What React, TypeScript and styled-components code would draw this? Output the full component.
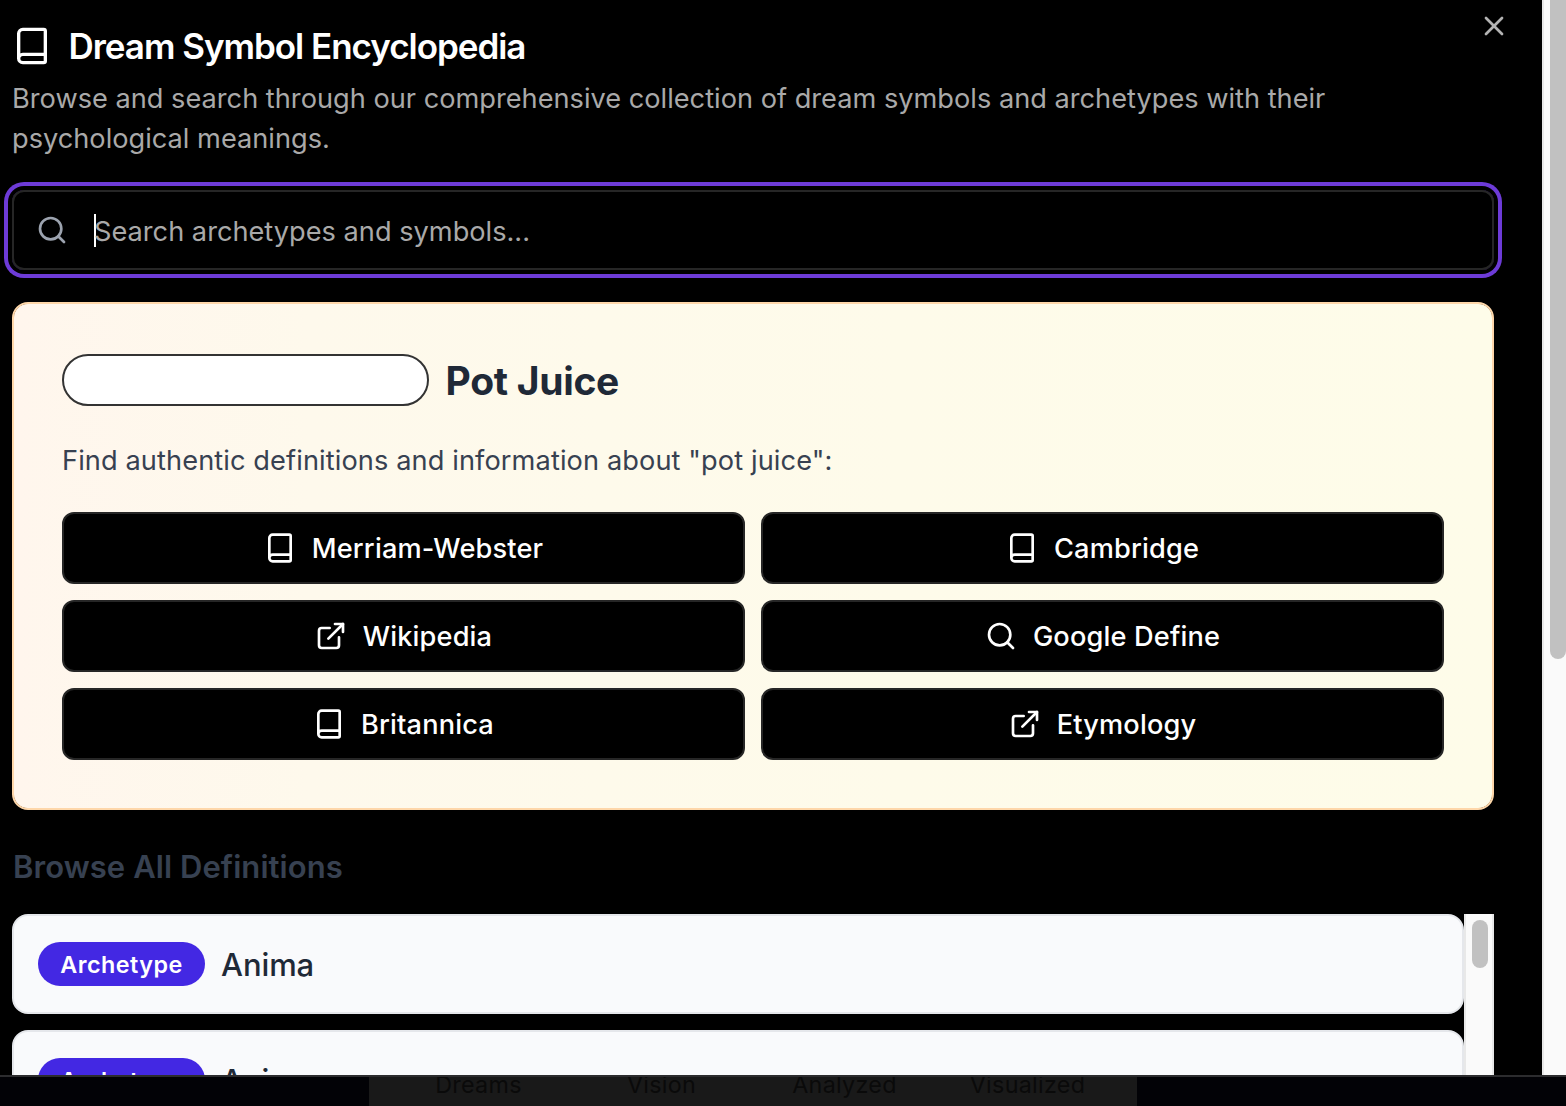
import React from "react";
import styled, { createGlobalStyle } from "styled-components";
import { Book, ExternalLink, Search, X } from "lucide-react";

const Global = createGlobalStyle`
  * { box-sizing: border-box; }
  body { margin: 0; background: #020206; overflow: hidden; font-family: Inter, "Liberation Sans", sans-serif; }
  h1, h2, h3, p { margin: 0; }
`;

const Screen = styled.div`
  width: 1566px;
  height: 1106px;
  display: flex;
  flex-direction: column;
  overflow: hidden;
`;

const Dialog = styled.main`
  position: relative;
  height: 1077px;
  flex: none;
  display: flex;
  background: #000;
  border-bottom: 2px solid #2c2c2e;
  overflow: hidden;
`;

const Content = styled.div`
  flex: 1;
  min-width: 0;
  padding: 22px 48px 0 12px;
  display: flex;
  flex-direction: column;
`;

const Header = styled.header`
  display: flex;
  flex-direction: column;
  gap: 9px;
`;

const Title = styled.h1`
  display: flex;
  align-items: center;
  gap: 16.5px;
  height: 48px;
  color: #fff;
  font-size: 35px;
  font-weight: 600;
  letter-spacing: -1.03px;
  white-space: nowrap;
`;

const Description = styled.p`
  color: #a9a9a9;
  font-size: 27.2px;
  line-height: 40px;
  letter-spacing: 0;
  white-space: nowrap;
`;

const CloseButton = styled.button`
  position: absolute;
  top: 10px;
  right: 56px;
  width: 32px;
  height: 32px;
  padding: 0;
  border: 0;
  background: none;
  color: #b3b3b3;
`;

const SearchField = styled.label`
  display: flex;
  align-items: center;
  flex: none;
  height: 80px;
  margin-top: 31px;
  padding-left: 22px;
  border: 2px solid #262626;
  border-radius: 12px;
  box-shadow: 0 0 0 4px #000, 0 0 0 8px #6d3bd7;
  color: #9ca3af;
`;

const Caret = styled.span`
  width: 2px;
  height: 33px;
  margin-left: 26px;
  margin-right: -2px;
  background: #fff;
`;

const Placeholder = styled.span`
  padding-top: 4px;
  color: #a9a9a9;
  font-size: 27.2px;
  line-height: 40px;
  letter-spacing: 0;
`;

const Card = styled.section`
  flex: none;
  height: 508px;
  margin-top: 32px;
  padding: 48px;
  border: 2px solid #fed7aa;
  border-radius: 16px;
  background: linear-gradient(to right, #fff6ed, #fef9ec 20%, #fefbea 60%, #fefce9) padding-box;
  background-color: #fed7aa;
`;

const CardHeader = styled.div`
  display: flex;
  align-items: center;
  gap: 16.5px;
  height: 56px;
`;

const EmptyBadge = styled.span`
  width: 367px;
  height: 52px;
  border: 2px solid #333;
  border-radius: 26px;
  background: #fff;
`;

const Term = styled.h2`
  padding-top: 2px;
  color: #1f2937;
  font-size: 39px;
  font-weight: 700;
  line-height: 56px;
  letter-spacing: -0.3px;
`;

const Prompt = styled.p`
  margin-top: 33px;
  color: #374151;
  font-size: 27.2px;
  line-height: 40px;
  letter-spacing: 0.1px;
`;

const LinkGrid = styled.div`
  display: grid;
  grid-template-columns: 1fr 1fr;
  gap: 16px;
  margin-top: 31px;
`;

const LinkButton = styled.button`
  display: flex;
  align-items: center;
  justify-content: center;
  gap: 16px;
  height: 72px;
  padding: 0;
  border: 2px solid #262626;
  border-radius: 12px;
  background: #000;
  color: #fff;
  font: 500 27.2px/40px Inter, "Liberation Sans", sans-serif;
  letter-spacing: 0.15px;
`;

const LinkLabel = styled.span`
  padding-top: 2px;
`;

const SectionTitle = styled.h3`
  margin-top: 33px;
  padding-left: 1px;
  color: #374151;
  font-size: 31px;
  font-weight: 600;
  line-height: 48px;
  letter-spacing: 0.07px;
`;

const ListViewport = styled.div`
  display: flex;
  flex: 1;
  min-height: 0;
  margin-top: 23px;
  overflow: hidden;
`;

const List = styled.div`
  flex: 1;
  display: flex;
  flex-direction: column;
  gap: 16px;
`;

const Row = styled.div`
  flex: none;
  display: flex;
  align-items: center;
  gap: 16px;
  height: 100px;
  padding: 0 24px;
  border: 2px solid #e5e7eb;
  border-radius: 16px;
  background: #f9fafc;
`;

const Badge = styled.span`
  display: flex;
  align-items: center;
  justify-content: center;
  width: 167px;
  height: 44px;
  border-radius: 22px;
  background: #4328e3;
  color: #fff;
  font-size: 23.3px;
  font-weight: 600;
  letter-spacing: 0.5px;
`;

const RowName = styled.span`
  color: #1f2937;
  font-size: 31px;
  font-weight: 500;
  letter-spacing: -0.1px;
`;

const ListTrack = styled.div`
  width: 30px;
  padding: 6px 0 0 6px;
  border: solid #e8e8e8;
  border-width: 0 2px;
  background: #fafafa;
`;

const ListThumb = styled.div`
  width: 16px;
  height: 48px;
  border-radius: 8px;
  background: #c1c1c1;
`;

const PageTrack = styled.div`
  width: 24px;
  padding-left: 6px;
  border-left: 2px solid #e8e8e8;
  background: #fafafa;
`;

const PageThumb = styled.div`
  width: 16px;
  height: 659px;
  border-radius: 0 0 8px 8px;
  background: #c1c1c1;
`;

const Backdrop = styled.footer`
  flex: 1;
  display: flex;
  justify-content: center;
  padding-right: 60px;
`;

const Stats = styled.div`
  display: flex;
  width: 768px;
  padding: 0 18px;
  background: #191919;
`;

const Stat = styled.span`
  flex: 1;
  color: #0a0a0a;
  font-size: 23.3px;
  line-height: 16px;
  text-align: center;
  letter-spacing: 0.3px;
`;

const links = [
  { label: "Merriam-Webster", Icon: Book },
  { label: "Cambridge", Icon: Book },
  { label: "Wikipedia", Icon: ExternalLink },
  { label: "Google Define", Icon: Search },
  { label: "Britannica", Icon: Book },
  { label: "Etymology", Icon: ExternalLink },
];

const definitions = ["Anima", "Animus"];

const stats = ["Dreams", "Vision", "Analyzed", "Visualized"];

export default function App() {
  return (
    <Screen>
      <Global />
      <Dialog>
        <Content>
          <Header>
            <Title><Book size={40} />Dream Symbol Encyclopedia</Title>
            <Description>
              Browse and search through our comprehensive collection of dream symbols and archetypes with their<br />
              psychological meanings.
            </Description>
          </Header>
          <SearchField>
            <Search size={32} />
            <Caret />
            <Placeholder>Search archetypes and symbols...</Placeholder>
          </SearchField>
          <Card>
            <CardHeader>
              <EmptyBadge />
              <Term>Pot Juice</Term>
            </CardHeader>
            <Prompt>Find authentic definitions and information about "pot juice":</Prompt>
            <LinkGrid>
              {links.map(({ label, Icon }) => (
                <LinkButton key={label}>
                  <Icon size={32} />
                  <LinkLabel>{label}</LinkLabel>
                </LinkButton>
              ))}
            </LinkGrid>
          </Card>
          <SectionTitle>Browse All Definitions</SectionTitle>
          <ListViewport>
            <List>
              {definitions.map((name) => (
                <Row key={name}>
                  <Badge>Archetype</Badge>
                  <RowName>{name}</RowName>
                </Row>
              ))}
            </List>
            <ListTrack><ListThumb /></ListTrack>
          </ListViewport>
        </Content>
        <PageTrack><PageThumb /></PageTrack>
        <CloseButton aria-label="Close"><X size={32} /></CloseButton>
      </Dialog>
      <Backdrop>
        <Stats>
          {stats.map((name) => <Stat key={name}>{name}</Stat>)}
        </Stats>
      </Backdrop>
    </Screen>
  );
}
